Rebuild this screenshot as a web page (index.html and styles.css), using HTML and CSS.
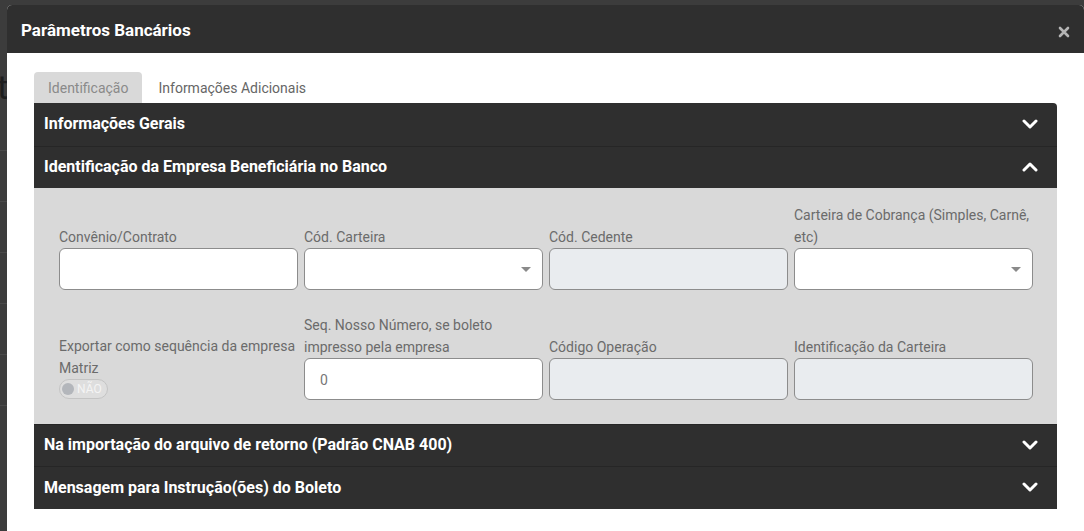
FILE: index.html
```html
<!DOCTYPE html>
<html lang="pt-BR">
<head>
<meta charset="utf-8">
<title>Parâmetros Bancários</title>
<link rel="stylesheet" href="styles.css">
</head>
<body>
<div class="backdrop">
  <div class="bg-page">
    <div class="bg-big">t</div>
    <div class="bg-line"></div>
    <div class="bg-line"></div>
    <div class="bg-line"></div>
    <div class="bg-line"></div>
    <div class="bg-line"></div>
    <div class="bg-line"></div>
  </div>
</div>
<div class="modal">
  <div class="modal-header">
    <h1 class="modal-title">Parâmetros Bancários</h1>
    <span class="close">
      <svg width="12" height="12" viewBox="0 0 12 12"><path d="M2 2 L10 10 M10 2 L2 10" stroke="#b5b5b5" stroke-width="2.6" stroke-linecap="round"/></svg>
    </span>
  </div>
  <div class="modal-body">
    <div class="tabs">
      <div class="tab tab-active">Identificação</div>
      <div class="tab">Informações Adicionais</div>
    </div>
    <div class="accordion">
      <div class="acc-head acc-first">
        <span>Informações Gerais</span>
        <svg class="chev" width="16" height="10" viewBox="0 0 16 10"><path d="M2 2 L8 8 L14 2" fill="none" stroke="#fff" stroke-width="3" stroke-linecap="round" stroke-linejoin="round"/></svg>
      </div>
      <div class="acc-head">
        <span>Identificação da Empresa Beneficiária no Banco</span>
        <svg class="chev" width="16" height="10" viewBox="0 0 16 10"><path d="M2 8 L8 2 L14 8" fill="none" stroke="#fff" stroke-width="3" stroke-linecap="round" stroke-linejoin="round"/></svg>
      </div>
      <div class="acc-body">
        <div class="form-row">
          <div class="field">
            <label class="lbl">Convênio/Contrato</label>
            <div class="input"></div>
          </div>
          <div class="field">
            <label class="lbl">Cód. Carteira</label>
            <div class="input select"><span class="caret"></span></div>
          </div>
          <div class="field">
            <label class="lbl">Cód. Cedente</label>
            <div class="input disabled"></div>
          </div>
          <div class="field">
            <label class="lbl">Carteira de Cobrança (Simples, Carnê, etc)</label>
            <div class="input select"><span class="caret"></span></div>
          </div>
        </div>
        <div class="form-row">
          <div class="field">
            <label class="lbl lbl-wide">Exportar como sequência da empresa Matriz</label>
            <div class="toggle"><span class="knob"></span><span class="toggle-text">NÃO</span></div>
          </div>
          <div class="field">
            <label class="lbl">Seq. Nosso Número, se boleto impresso pela empresa</label>
            <div class="input"><span class="value">0</span></div>
          </div>
          <div class="field">
            <label class="lbl">Código Operação</label>
            <div class="input disabled"></div>
          </div>
          <div class="field">
            <label class="lbl">Identificação da Carteira</label>
            <div class="input disabled"></div>
          </div>
        </div>
      </div>
      <div class="acc-head">
        <span>Na importação do arquivo de retorno (Padrão CNAB 400)</span>
        <svg class="chev" width="16" height="10" viewBox="0 0 16 10"><path d="M2 2 L8 8 L14 2" fill="none" stroke="#fff" stroke-width="3" stroke-linecap="round" stroke-linejoin="round"/></svg>
      </div>
      <div class="acc-head acc-last">
        <span>Mensagem para Instrução(ões) do Boleto</span>
        <svg class="chev" width="16" height="10" viewBox="0 0 16 10"><path d="M2 2 L8 8 L14 2" fill="none" stroke="#fff" stroke-width="3" stroke-linecap="round" stroke-linejoin="round"/></svg>
      </div>
    </div>
  </div>
</div>
</body>
</html>
```
FILE: styles.css
```css
* { box-sizing: border-box; }
html, body {
  margin: 0;
  padding: 0;
  width: 1084px;
  height: 531px;
  overflow: hidden;
  font-family: Roboto, "Liberation Sans", Arial, sans-serif;
}
body { background: #3b3b3b; }

.backdrop {
  position: fixed;
  inset: 0;
  background: #3c3c3c;
}
.bg-page {
  display: flex;
  flex-direction: column;
  padding-top: 70px;
}
.bg-big {
  font-size: 34px;
  line-height: 34px;
  color: #1e1e1e;
  margin-left: -3px;
  height: 80px;
}
.bg-line {
  height: 1px;
  background: #4a4a4a;
  margin-bottom: 50px;
}

.modal {
  position: fixed;
  top: 5px;
  left: 7px;
  right: 0;
  bottom: 0;
  background: #fff;
  border-radius: 5px 5px 0 0;
  overflow: hidden;
}
.modal-header {
  height: 48px;
  background: #2f2f2f;
  display: flex;
  align-items: center;
  justify-content: space-between;
  padding: 0 14px 0 14px;
}
.modal-title {
  margin: 0;
  color: #fff;
  font-size: 17px;
  font-weight: 700;
  padding-top: 2px;
}
.close {
  display: flex;
  width: 12px;
  height: 12px;
  margin-top: 5px;
}

.modal-body {
  padding: 19px 27px 0 27px;
}
.tabs {
  display: flex;
  gap: 2px;
}
.tab {
  height: 31px;
  padding: 0 14px;
  display: flex;
  align-items: center;
  font-size: 14px;
  color: #666;
  border-radius: 4px 4px 0 0;
}
.tab-active {
  background: #d9d9d9;
  color: #8a8a8a;
}

.accordion {
  background: #2f2f2f;
  border-radius: 0 4px 0 0;
  overflow: hidden;
}
.acc-head {
  height: 42px;
  display: flex;
  align-items: center;
  justify-content: space-between;
  padding: 0 19px 2px 10px;
  color: #fff;
  font-size: 16px;
  font-weight: 700;
  border-top: 1px solid #262626;
}
.acc-first { border-top: none; height: 43px; }
.acc-last { height: 43px; }
.chev { display: block; }

.acc-body {
  background: #d9d9d9;
  padding: 16px 25px 24px 25px;
  display: flex;
  flex-direction: column;
  gap: 24px;
}
.form-row {
  display: grid;
  grid-template-columns: repeat(4, 239px);
  column-gap: 6px;
  align-items: end;
}
.field {
  display: flex;
  flex-direction: column;
}
.lbl {
  font-size: 14px;
  line-height: 22px;
  color: #6b6b6b;
}
.lbl-wide { margin-right: -6px; }
.input {
  height: 42px;
  border: 1px solid #8c8c8c;
  border-radius: 6px;
  background: #fff;
  position: relative;
  display: flex;
  align-items: center;
  padding: 0 15px;
}
.input.disabled { background: #e9ecef; }
.value {
  font-size: 14px;
  color: #777;
  margin-top: 2px;
}
.caret {
  position: absolute;
  right: 11px;
  top: 18px;
  width: 0;
  height: 0;
  border-left: 5px solid transparent;
  border-right: 5px solid transparent;
  border-top: 5px solid #8a8a8a;
}

.toggle {
  width: 49px;
  height: 20px;
  border: 1px solid #c4c4c4;
  border-radius: 10px;
  background: #dedede;
  display: flex;
  align-items: center;
  padding-left: 2px;
  gap: 3px;
  margin-bottom: 1px;
}
.knob {
  width: 12px;
  height: 12px;
  border-radius: 50%;
  background: #b3b6bb;
}
.toggle-text {
  font-size: 12px;
  color: #f4f4f4;
}
```
